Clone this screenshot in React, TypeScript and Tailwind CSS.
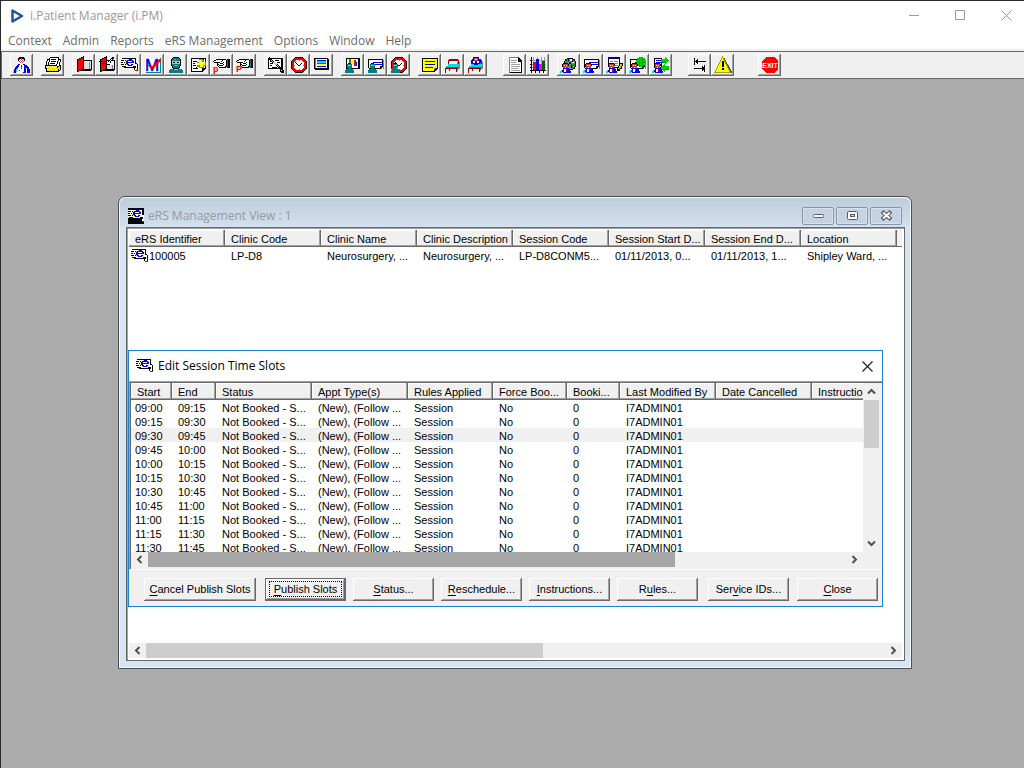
import React from "react";

type Shape = [color: string, d: string];

function Pixels({ shapes }: { shapes: Shape[] }) {
  return (
    <>
      {shapes.map(([color, d], i) => (
        <path key={i} fill={color} d={d} />
      ))}
    </>
  );
}

const palette: Record<string, string> = {
  k: "#000000",
  w: "#ffffff",
  b: "#0000ee",
  r: "#e00000",
  s: "#c05040",
  y: "#f0e000",
  Y: "#fff890",
  c: "#00e0ff",
  t: "#008080",
  g: "#808080",
};

function Bitmap({ rows, top = 0 }: { rows: string[]; top?: number }) {
  return (
    <>
      {Object.entries(palette).map(([key, color]) => {
        const d = rows
          .flatMap((row, y) => row.split("").map((ch, x) => (ch === key ? `M${x} ${y + top}h1v1h-1z` : "")))
          .join("");
        return d ? <path key={key} fill={color} d={d} /> : null;
      })}
    </>
  );
}

function Icon({ children }: { children: React.ReactNode }) {
  return (
    <svg viewBox="0 0 18 18" className="h-[18px] w-[18px] shrink-0" shapeRendering="crispEdges" aria-hidden="true">
      {children}
    </svg>
  );
}

const BLUE = "#0000ee";
const TEAL = "#008080";
const RED = "#ff0000";

function Clerk() {
  return (
    <Pixels
      shapes={[
        ["#000", "M3 7h5v1h-5zM2 8h1v3h-1zM8 8h1v2h-1z"],
        ["#c04030", "M3 8h5v4h-5z"],
        ["#fff", "M4 9h1v1h-1zM6 9h1v1h-1zM5 11h1v1h-1z"],
        [BLUE, "M3 12h6v1h1v2h1v2h-8v-1h-1v-2h1z"],
        ["#00e0ff", "M0 15h1v-1h1v3h-2z"],
        ["#fff", "M4 13h2v3h-2z"],
        [RED, "M6 13h1v2h-1z"],
      ]}
    />
  );
}

function Surgeon() {
  return (
    <Pixels
      shapes={[
        ["#000", "M4 7h3v1h-3z"],
        [TEAL, "M3 8h5v4h-5zM2 13h7v1h1v3h-9v-3h1zM4 12h3v1h-3z"],
        ["#e8a080", "M4 9h3v1h-3z"],
        [RED, "M7 9h1v1h-1z"],
      ]}
    />
  );
}

function Clock() {
  return (
    <>
      <circle cx="9" cy="9" r="7" fill="#fff" stroke="#000" strokeWidth="3" />
      <circle cx="9" cy="9" r="6.5" fill="#fff" stroke={RED} strokeWidth="2" />
      <Pixels
        shapes={[
          ["#000", "M8 9h2v1h-2zM7 8h1v1h-1zM6 7h1v1h-1zM5 6h1v1h-1zM10 8h1v1h-1zM11 7h1v1h-1z"],
          ["#808080", "M9 4h1v1h-1zM9 13h1v1h-1zM4 9h1v1h-1zM13 9h1v1h-1z"],
        ]}
      />
    </>
  );
}

const slotSearchRows = [
  ".kkkkkkkkkkkkkk..",
  "wwwwwwwybbbwwwk..",
  "kkkwkybbbbbbywk..",
  "wwwwwbbwwwwbbwk..",
  "kkwkwbbbbbbbbwk..",
  "wwwwybbwwwwwwwkk.",
  "kkkwkybbwwbbywwwk",
  "wwwwwwybbbbywwwwk",
  "wkkkkwwwwwwwkkkwk",
  "...kkkkkkkkkkkkwk",
  ".............kwwk",
  ".............kwwk",
  "..............rrr",
];

function SlotSearch() {
  return <Bitmap rows={slotSearchRows} top={2} />;
}

function Bed() {
  return (
    <Pixels
      shapes={[
        ["#808080", "M13 6h3v7h-2v2h-1z"],
        ["#a00000", "M5 3h9v1h1v5h-1v-4h-9v4h-1v-5h1zM1 12h13v1h-13zM1 13h1v4h-1zM12 13h1v3h-1zM5 13h1v2h-1z"],
        ["#fff", "M6 5h7v3h-7z"],
        ["#00e0e0", "M4 8h11v2h-1v2h-12v-2h2z"],
        [TEAL, "M2 11h12v1h-12z"],
      ]}
    />
  );
}

function Book() {
  return (
    <>
      <Pixels
        shapes={[
          ["#000", "M8 4h9v10h-1v1h-11v-2h3z"],
          ["#e0e0e0", "M9 5h7v8h-7z"],
          ["#808080", "M14 6h1v7h-1z"],
        ]}
      />
      <path d="M2 4l6-3v12l-6 3z" fill={RED} stroke="#000" strokeWidth="1" />
      <path d="M3 4l5-2.500v11l-5 2.500z" fill={RED} />
    </>
  );
}

function Hand({ letter }: { letter: string }) {
  return (
    <>
      <Bitmap
        top={3}
        rows={[
          "...kkkkkkkkkk.kkk",
          ".kkwwwwwwkwwwktkk",
          "kwwwwwwwkwwwwktkk",
          ".kkkkkkwwwkwwktkk",
          "....kwwkkkwwwktkk",
          "....kkwwwwkwwktkk",
          "....kwkkkkwwwktkk",
          ".....kwwwwwwkktkk",
          "......kkkkkkk.kkk",
        ]}
      />
      <text x="0" y="16" fill={RED} fontSize="9" fontWeight="700" fontFamily="Liberation Sans, sans-serif">
        {letter}
      </text>
    </>
  );
}

function Paper() {
  return (
    <Pixels
      shapes={[
        ["#808080", "M16 4h1v9h-1zM5 12h10v1h-10z"],
        ["#000", "M1 3h15v8h-1v1h-1v1h-12v-1h-1z"],
        ["#fff", "M2 4h13v6h-2v2h-11z"],
        [BLUE, "M6 6h9v1h-9zM6 8h9v1h-9z"],
      ]}
    />
  );
}

const tools: Record<string, React.ReactNode> = {
  Doctor: (
    <Bitmap
      top={1}
      rows={[
        "......kkkkk.......",
        ".....kkkrkkk......",
        ".....kswswsk......",
        ".....kwswswk......",
        "......swsws.......",
        "......wswsw.......",
        ".......www........",
        ".....bbwwwbb......",
        "....bbwwrwwbbb....",
        "...bbbwwrwwbbbb...",
        "..bbbwwwrwwbbbbb..",
        "..bbcwwwrwwbbwbb..",
        ".bbccwwwwwwbbwbbb.",
        ".bbcwwrwwwwbbwbbb.",
        "cbbcwwwwwwwbbwbbb.",
        "cbb.wwwwwwbbbwbbb.",
      ]}
    />
  ),
  Fax: (
    <Bitmap
      top={1}
      rows={[
        "......kkkkkkkkk...",
        ".....kwwwwwwwwk...",
        "...kkkwkkkkkwwkkk.",
        "...kwkwwwwwwwwkwk.",
        "..kwwkwkkkkkwkwwk.",
        "..kwkwwwwwwwwkwk..",
        "..kwkwkkkkkwwkwk..",
        "..kwkwwwwwwwkwwk..",
        ".kkkkkkkkkkkkwwkk.",
        ".kYyYyYyYyYyYkkyk.",
        ".kyYyYyYyYyYykyyk.",
        ".kkyyyyyyyyyyyyyk.",
        "..kYyYyYyYyYyYkyk.",
        "..kyyyyyyyyyyykk..",
        "..kkkkkkkkkkkkk...",
      ]}
    />
  ),
  "Open record": <Book />,
  "Edit record": (
    <>
      <Book />
      <Pixels
        shapes={[
          ["#fff", "M9 5h7v4h-7z"],
          ["#000", "M1 5h7v1h-7zM4 7h5v1h-5zM8 7h2v1h2v1h-4zM14 1h2v1h-2zM13 2h1v1h-1zM12 3h1v1h-1zM11 4h1v1h-1zM10 5h1v1h-1zM15 2h1v1h-1zM14 3h1v1h-1zM13 4h1v1h-1zM12 5h1v2h-1z"],
          ["#fff", "M9 7h1v1h-1zM11 6h1v1h-1zM13 3h1v1h-1zM12 4h1v1h-1zM11 5h1v1h-1z"],
          ["#000080", "M14 2h1v1h-1z"],
        ]}
      />
    </>
  ),
  "Session slots": <SlotSearch />,
  Maternity: (
    <>
      <Pixels shapes={[["#fff", "M1 2h15v14h-15z"], [TEAL, "M16 2h1v14h-1zM2 16h15v1h-15z"]]} />
      <text
        x="1"
        y="15"
        fill={BLUE}
        stroke={BLUE}
        strokeWidth="0.500"
        fontSize="17"
        fontFamily="Liberation Sans, sans-serif"
      >
        M
      </text>
      <path d="M5 9l3 3 8-8" stroke={RED} strokeWidth="1.6" fill="none" />
    </>
  ),
  Theatre: (
    <Pixels
      shapes={[
        ["#000", "M6 1h6v1h1v1h1v7h-1v2h-1v1h-6v-1h-1v-2h-1v-7h1v-1h1z"],
        [TEAL, "M6 2h6v1h1v2h-8v-2h1zM5 8h8v2h-1v2h-6v-2h-1z"],
        ["#e8b878", "M5 5h8v3h-8z"],
        ["#000", "M6 6h2v1h-2zM10 6h2v1h-2z"],
        ["#00c0c0", "M7 3h2v1h-2zM7 9h4v1h-4z"],
        [TEAL, "M3 13h12v1h1v3h-14v-3h1z"],
        ["#e8b878", "M7 13h4v1h-4z"],
      ]}
    />
  ),
  Notes: (
    <Pixels
      shapes={[
        ["#000", "M1 2h15v11h-1v1h-1v1h-1v1h-12z"],
        ["#fff", "M2 3h13v9h-3v3h-10z"],
        ["#000", "M3 5h4v1h-4zM3 7h2v1h-2zM3 9h3v1h-3zM3 12h5v1h-5z"],
        ["#808080", "M9 3h4v1h1v2h2v4h-2v2h-5v-1h-2v-5h2z"],
        ["#ffff00", "M9 4h3v2h3v3h-2v2h-3v-2h-3v-2h2z"],
        [BLUE, "M8 2h1v1h-1zM13 3h1v1h-1zM6 11h1v1h-1z"],
        ["#fff", "M11 6h2v2h-2z"],
      ]}
    />
  ),
  "Refer in": <Hand letter="p" />,
  "Refer out": <Hand letter="P" />,
  "Find clinic": (
    <>
      <Pixels
        shapes={[
          ["#000", "M1 2h15v11h-15z"],
          ["#fff", "M2 3h12v9h-12z"],
          ["#000", "M3 5h2v1h-2zM3 7h3v1h-3zM3 9h2v1h-2zM8 4h4v1h-4zM10 6h3v1h-3zM5 11h5v1h-5z"],
        ]}
      />
      <path d="M2 2l12 11" stroke="#000" strokeWidth="2" />
      <path d="M4 4l8 7" stroke="#c0c0c0" strokeWidth="1" />
      <Pixels shapes={[["#000", "M13 12h3v2h1v3h-3v-1h-1z"], ["#fff", "M14 14h1v1h-1z"]]} />
    </>
  ),
  "Waiting time": <Clock />,
  Diary: (
    <Pixels
      shapes={[
        ["#000", "M1 2h14v1h1v11h-14v-1h-1z"],
        ["#fff", "M2 3h12v9h-12z"],
        ["#808080", "M2 3h1v9h-1z"],
        [BLUE, "M4 4h9v1h-9zM4 10h9v1h-9z"],
        ["#00e0ff", "M4 5h9v2h-9z"],
        [RED, "M4 7h9v1h-9z"],
        ["#ffff00", "M4 8h9v1h-9z"],
      ]}
    />
  ),
  "Theatre chart": (
    <>
      <Pixels
        shapes={[
          ["#000", "M2 2h14v11h-14z"],
          ["#fff", "M3 3h11v9h-11z"],
          [RED, "M10 4h2v6h-2z"],
          ["#ffff00", "M8 4h1v4h-1z"],
          ["#00a000", "M5 3h2v4h-2z"],
          [BLUE, "M12 6h1v4h-1z"],
        ]}
      />
      <Surgeon />
    </>
  ),
  "Theatre list": (
    <>
      <Paper />
      <Surgeon />
    </>
  ),
  "Theatre time": (
    <>
      <Clock />
      <Surgeon />
    </>
  ),
  Memo: (
    <Pixels
      shapes={[
        ["#000", "M1 2h16v11h-1v1h-1v1h-1v1h-13z"],
        ["#ffff00", "M2 3h14v9h-3v3h-11z"],
        [BLUE, "M4 5h10v1h-10zM4 8h10v1h-10zM4 11h8v1h-8z"],
        ["#808000", "M13 12h2v1h-1v1h-1z"],
      ]}
    />
  ),
  Bed: <Bed />,
  "Bed nurse": (
    <>
      <Bed />
      <Pixels
        shapes={[
          [BLUE, "M6 1h6v2h2v4h-1v1h-2v1h-4v-1h-2v-1h-1v-3h2z"],
          ["#c04030", "M7 2h4v3h-4z"],
          ["#fff", "M8 3h2v1h-2zM6 5h2v2h-2zM10 5h2v2h-2z"],
        ]}
      />
    </>
  ),
  Document: (
    <Pixels
      shapes={[
        ["#808080", "M3 1h10v1h-9v15h-1z"],
        ["#000", "M12 1h1v1h1v1h1v1h1v13h-12v-1h11v-10h-3z"],
        ["#fff", "M4 2h8v4h3v10h-11z"],
        ["#a0a0a0", "M5 4h6v1h-6zM5 6h5v1h-5zM5 8h9v1h-9zM5 10h9v1h-9zM5 12h7v1h-7zM5 14h9v1h-9z"],
      ]}
    />
  ),
  Statistics: (
    <Pixels
      shapes={[
        ["#a0a0a0", "M4 1h1v13h-1zM8 1h1v13h-1zM12 1h1v13h-1zM15 1h1v13h-1zM2 4h15v1h-15zM2 8h15v1h-15zM2 11h15v1h-15z"],
        ["#000", "M2 1h1v16h-1zM1 14h16v1h-16zM1 4h1v1h-1zM1 8h1v1h-1zM1 11h1v1h-1zM6 15h1v2h-1zM10 15h1v2h-1zM14 15h1v2h-1z"],
        [RED, "M4 6h3v8h-3z"],
        [BLUE, "M7 3h3v11h-3z"],
        ["#ff00ff", "M10 8h3v6h-3z"],
        ["#006000", "M13 5h3v9h-3z"],
      ]}
    />
  ),
  "Booking web": (
    <>
      <circle cx="10" cy="8" r="6" fill="#808080" stroke="#000" strokeWidth="1" />
      <Pixels
        shapes={[
          ["#00a000", "M6 4h3v2h-2v2h-2v-2h1zM11 8h4v2h-2v2h-2z"],
          ["#fff", "M10 3h2v2h-2zM12 6h2v1h-2z"],
          [BLUE, "M9 6h2v2h-2z"],
          ["#000", "M8 3h1v2h-1zM12 4h1v2h-1zM11 9h1v3h-1z"],
        ]}
      />
      <Clerk />
    </>
  ),
  "Booking list": (
    <>
      <Paper />
      <Clerk />
    </>
  ),
  "Booking edit": (
    <>
      <Pixels
        shapes={[
          ["#000080", "M2 1h12v2h-12z"],
          ["#000", "M2 3h1v8h-1zM13 3h1v8h-1zM4 11h9v1h-9z"],
          ["#fff", "M3 3h10v8h-10z"],
          ["#808080", "M4 5h3v1h-3zM8 5h4v1h-4zM4 7h3v1h-3zM8 7h4v1h-4zM9 9h3v1h-3z"],
          ["#000", "M14 7h3v3h-1v3h-2v2h-3v-3h1v-2h2z"],
          ["#e0c000", "M14 8h2v2h-1v2h-1v1h-2v-1h1v-2h1z"],
        ]}
      />
      <Clerk />
    </>
  ),
  "Booking globe": (
    <>
      <Paper />
      <circle cx="12" cy="6" r="5" fill="#00d800" />
      <path d="M8 3.500h8M7 6.500h10M8 9.500h8M10.500 1v10M13.500 1v10" stroke="#00a800" strokeWidth="1" fill="none" />
      <Clerk />
    </>
  ),
  "Booking transfer": (
    <>
      <Pixels
        shapes={[
          ["#000", "M2 2h8v10h-8z"],
          ["#fff", "M3 3h6v8h-6z"],
          [BLUE, "M4 4h5v1h-5zM4 6h5v1h-5z"],
          ["#00d000", "M9 3h4v-2h1v1h1v1h1v1h1v1h-1v1h-1v1h-1v1h-1v-2h-4zM17 10v4h-4v2h-1v-1h-1v-1h-1v-1h-1v-2h1v-1h1v-1h1v-1h1v2z"],
          ["#008000", "M9 6h4v1h-4zM13 13h4v1h-4z"],
        ]}
      />
      <Clerk />
    </>
  ),
  "Tab order": (
    <Pixels
      shapes={[
        ["#000", "M3 2h1v7h-1zM4 5h11v1h-11zM5 4h1v3h-1zM6 3h1v5h-1zM13 9h1v7h-1zM3 12h10v1h-10zM12 11h1v3h-1zM11 10h1v5h-1z"],
      ]}
    />
  ),
  Alert: (
    <>
      <path d="M10 1l8 15v1h-15z" fill="#505050" />
      <path d="M8.500 1l7.500 15h-15z" fill="#ffff00" stroke="#a0a000" strokeWidth="1" />
      <Pixels shapes={[["#000", "M8 5h2v6h-2zM8 12h2v2h-2z"]]} />
    </>
  ),
  Exit: (
    <>
      <path d="M5 1h8l4 4v8l-4 4h-8l-4-4v-8z" fill={RED} />
      <text x="9" y="12" textAnchor="middle" fill="#fff" fontSize="7" fontWeight="700" fontFamily="Liberation Sans Narrow, Liberation Sans, sans-serif">
        EXIT
      </text>
    </>
  ),
};

const toolGroups: { lead: string; items: string[] }[] = [
  { lead: "ml-2", items: ["Doctor"] },
  { lead: "ml-2", items: ["Fax"] },
  {
    lead: "ml-2",
    items: ["Open record", "Edit record", "Session slots", "Maternity", "Theatre", "Notes", "Refer in", "Refer out"],
  },
  { lead: "ml-2", items: ["Find clinic", "Waiting time", "Diary"] },
  { lead: "ml-2", items: ["Theatre chart", "Theatre list", "Theatre time"] },
  { lead: "ml-2", items: ["Memo", "Bed", "Bed nurse"] },
  { lead: "ml-4", items: ["Document", "Statistics"] },
  { lead: "ml-2", items: ["Booking web", "Booking list", "Booking edit", "Booking globe", "Booking transfer"] },
  { lead: "ml-4", items: ["Tab order", "Alert"] },
  { lead: "ml-6", items: ["Exit"] },
];

const menus = ["Context", "Admin", "Reports", "eRS Management", "Options", "Window", "Help"];

const clinicColumns = [
  "eRS Identifier",
  "Clinic Code",
  "Clinic Name",
  "Clinic Description",
  "Session Code",
  "Session Start D...",
  "Session End D...",
  "Location",
];
const clinicRow = [
  "100005",
  "LP-D8",
  "Neurosurgery, ...",
  "Neurosurgery, ...",
  "LP-D8CONM5...",
  "01/11/2013, 0...",
  "01/11/2013, 1...",
  "Shipley Ward, ...",
];

const slotColumns: { label: string; width: string }[] = [
  { label: "Start", width: "w-[41px]" },
  { label: "End", width: "w-[44px]" },
  { label: "Status", width: "w-24" },
  { label: "Appt Type(s)", width: "w-24" },
  { label: "Rules Applied", width: "w-[85px]" },
  { label: "Force Boo...", width: "w-[74px]" },
  { label: "Booki...", width: "w-[53px]" },
  { label: "Last Modified By", width: "w-24" },
  { label: "Date Cancelled", width: "w-24" },
  { label: "Instructions", width: "w-24" },
];
const times = ["09:00", "09:15", "09:30", "09:45", "10:00", "10:15", "10:30", "10:45", "11:00", "11:15", "11:30", "11:45"];
const slots = times.slice(0, -1).map((start, i) => [
  start,
  times[i + 1],
  "Not Booked - S...",
  "(New), (Follow ...",
  "Session",
  "No",
  "0",
  "I7ADMIN01",
  "",
  "",
]);

const headerCell =
  "overflow-hidden whitespace-nowrap border-r border-b border-[#696969] bg-[#f0f0f0] px-1.5 pt-0.5 text-left font-normal shadow-[inset_-1px_-1px_0_#a0a0a0,inset_1px_1px_0_#fff]";

function Chevron({ d }: { d: string }) {
  return (
    <svg viewBox="0 0 9 9" className="h-[9px] w-[9px]" aria-hidden="true">
      <path d={d} fill="none" stroke="#505050" strokeWidth="2" />
    </svg>
  );
}

const LEFT = "M6.500 1L3 4.500L6.500 8";
const RIGHT = "M2.500 1L6 4.500L2.500 8";
const UP = "M1 6.500L4.500 3L8 6.500";
const DOWN = "M1 2.500L4.500 6L8 2.500";

function HScroll({ thumb, tail }: { thumb: string; tail: string }) {
  return (
    <div className={`flex h-[15px] shrink-0 items-stretch bg-[#f0f0f0] ${tail}`}>
      <button type="button" aria-label="Scroll left" className="flex w-[17px] items-center justify-center">
        <Chevron d={LEFT} />
      </button>
      <div className="flex flex-1">
        <div className={thumb} />
      </div>
      <button type="button" aria-label="Scroll right" className="flex w-[17px] items-center justify-center">
        <Chevron d={RIGHT} />
      </button>
    </div>
  );
}

function PushButton({ label, hot, wide, isDefault }: { label: string; hot: number; wide?: boolean; isDefault?: boolean }) {
  const text = (
    <span>
      {label.slice(0, hot)}
      <span className="underline underline-offset-2">{label[hot]}</span>
      {label.slice(hot + 1)}
    </span>
  );
  return (
    <button
      type="button"
      className={`flex h-[23px] items-center justify-center whitespace-nowrap bg-[#f0f0f0] ${wide ? "w-28" : "w-[81px]"} ${
        isDefault
          ? "border border-[#696969] shadow-[inset_-1px_-1px_0_#696969,inset_1px_1px_0_#fff,inset_-2px_-2px_0_#a0a0a0]"
          : "shadow-[inset_-1px_-1px_0_#696969,inset_1px_1px_0_#fff,inset_-2px_-2px_0_#a0a0a0]"
      }`}
    >
      {isDefault ? (
        <span className="flex h-4 w-[73px] items-center justify-center border border-dotted border-black">{text}</span>
      ) : (
        text
      )}
    </button>
  );
}

function CaptionButton({ label, children }: { label: string; children: React.ReactNode }) {
  return (
    <button
      type="button"
      aria-label={label}
      className="flex h-[18px] w-8 items-center justify-center rounded-[2px] border border-[#8796ad] bg-[#c4d2e2] shadow-[inset_0_0_0_1px_#d6e2ef]"
    >
      <svg viewBox="0 0 13 11" className="h-[11px] w-[13px]" aria-hidden="true">
        {children}
      </svg>
    </button>
  );
}

function ManagementWindow() {
  return (
    <section
      aria-label="eRS Management View"
      className="absolute top-[117px] left-[117px] flex h-[473px] w-[794px] flex-col rounded-t-[7px] border border-[#4b4f55] bg-[#d7e4f2] pr-[6px] pb-[7px] pl-[7px] shadow-[inset_0_0_0_1px_#f4f8fc]"
    >
      <header className="-mr-[5px] -ml-[6px] mt-px flex h-[29px] shrink-0 items-center justify-between rounded-t-[6px] bg-linear-to-b from-[#bfcddb] to-[#d3e0ee] pt-1.5 pr-2 pl-2">
        <div className="flex items-center gap-1">
          <span className="flex h-4 w-4 items-center justify-center overflow-hidden bg-black">
            <svg viewBox="0 1 16 16" className="h-4 w-4" shapeRendering="crispEdges" aria-hidden="true">
              <SlotSearch />
            </svg>
          </span>
          <h2 className="font-['Open_Sans',sans-serif] text-xs text-[#949aa2]">eRS Management View : 1</h2>
        </div>
        <div className="flex gap-[2px]">
          <CaptionButton label="Minimize">
            <rect x="1.500" y="4.500" width="10" height="3" rx="1" fill="#fff" stroke="#555c68" />
          </CaptionButton>
          <CaptionButton label="Restore">
            <rect x="1.500" y="1.500" width="10" height="8" rx="1" fill="#fff" stroke="#555c68" />
            <rect x="4.500" y="4.500" width="4" height="2" fill="#c4d2e2" stroke="#555c68" />
          </CaptionButton>
          <CaptionButton label="Close window">
            <path d="M2 1.500l9 8M11 1.500l-9 8" stroke="#555c68" strokeWidth="4" />
            <path d="M3 2.500l7 6M10 2.500l-7 6" stroke="#fff" strokeWidth="2" />
          </CaptionButton>
        </div>
      </header>
      <div className="flex min-h-0 flex-1 flex-col border border-[#696969] border-b-[#696969] bg-white shadow-[inset_1px_1px_0_#a0a0a0]">
        <div className="mt-0.5 mr-0.5 ml-0.5 flex min-h-0 flex-1 flex-col overflow-hidden">
          <table className="w-full table-fixed border-separate border-spacing-0 leading-[14px]">
            <thead>
              <tr>
                {clinicColumns.map((c) => (
                  <th key={c} className={`h-[17px] w-24 ${headerCell}`}>
                    {c}
                  </th>
                ))}
                <th aria-hidden="true" className="border-b border-[#696969] bg-[#f0f0f0]" />
              </tr>
            </thead>
            <tbody>
              <tr>
                {clinicRow.map((c, i) => (
                  <td key={i} className={`h-[18px] whitespace-nowrap ${i === 0 ? "pl-0.5" : "px-1.5"}`}>
                    {i === 0 ? (
                      <span className="flex items-center">
                        <Icon>
                          <SlotSearch />
                        </Icon>
                        {c}
                      </span>
                    ) : (
                      c
                    )}
                  </td>
                ))}
                <td />
              </tr>
            </tbody>
          </table>
        </div>
        <HScroll thumb="w-[397px] bg-[#cdcdcd]" tail="mr-0.5 ml-0.5 mb-0.5" />
      </div>
    </section>
  );
}

function SlotsDialog() {
  return (
    <section
      role="dialog"
      aria-label="Edit Session Time Slots"
      className="absolute top-[271px] left-[127px] flex h-[257px] w-[755px] flex-col border border-[#1883d7] bg-[#f0f0f0]"
    >
      <header className="flex h-[30px] shrink-0 items-center justify-between bg-white pr-2 pl-[7px]">
        <div className="flex items-center gap-1">
          <Icon>
            <SlotSearch />
          </Icon>
          <h2 className="font-['Open_Sans',sans-serif] text-xs text-black">Edit Session Time Slots</h2>
        </div>
        <button type="button" aria-label="Close dialog">
          <svg viewBox="0 0 13 13" className="h-[13px] w-[13px]" aria-hidden="true">
            <path d="M1.500 1.500l10 10M11.500 1.500l-10 10" stroke="#222" strokeWidth="1.200" />
          </svg>
        </button>
      </header>
      <div className="flex h-[188px] shrink-0 flex-col border-t border-l border-[#a0a0a0] bg-[#f0f0f0] shadow-[inset_1px_1px_0_#696969,0_1px_0_#fff]">
        <div className="mt-px mr-0.5 ml-px flex min-h-0 flex-1">
          <div className="min-w-0 flex-1 overflow-hidden bg-white">
            <table className="w-[777px] table-fixed border-separate border-spacing-0 leading-[14px]">
              <thead>
                <tr>
                  {slotColumns.map((c) => (
                    <th key={c.label} className={`h-[17px] ${c.width} ${headerCell}`}>
                      {c.label}
                    </th>
                  ))}
                </tr>
              </thead>
              <tbody className="leading-3">
                {slots.map((row, r) => (
                  <tr key={row[0]} className={r === 2 ? "bg-[#f0f0f0]" : "bg-white"}>
                    {row.map((c, i) => (
                      <td key={i} className={`h-[14px] pt-0.5 whitespace-nowrap ${i === 0 ? "px-1" : "px-1.5"}`}>
                        {c}
                      </td>
                    ))}
                  </tr>
                ))}
              </tbody>
            </table>
          </div>
          <div className="flex w-[17px] flex-col items-center bg-[#f0f0f0]">
            <button type="button" aria-label="Scroll up" className="flex h-[17px] w-full items-center justify-center">
              <Chevron d={UP} />
            </button>
            <div className="flex w-[15px] flex-1 flex-col">
              <div className="h-12 bg-[#cdcdcd]" />
            </div>
            <button type="button" aria-label="Scroll down" className="flex h-[17px] w-full items-center justify-center">
              <Chevron d={DOWN} />
            </button>
          </div>
        </div>
        <HScroll thumb="w-[527px] bg-[#a6a6a6]" tail="ml-px mr-[19px] mb-0.5" />
      </div>
      <div className="flex flex-1 items-center pt-[3px] pr-[4px] pl-[15px]">
        <div className="flex gap-[9px]">
          <PushButton label="Cancel Publish Slots" hot={0} wide />
          <PushButton label="Publish Slots" hot={0} isDefault />
        </div>
        <div className="ml-[7px] flex gap-[7px]">
          <PushButton label="Status..." hot={0} />
          <PushButton label="Reschedule..." hot={0} />
          <PushButton label="Instructions..." hot={0} />
          <PushButton label="Rules..." hot={1} />
        </div>
        <div className="ml-auto flex gap-2">
          <PushButton label="Service IDs..." hot={3} />
          <PushButton label="Close" hot={0} />
        </div>
      </div>
    </section>
  );
}

export default function App() {
  return (
    <div className="flex min-h-screen flex-col border-t border-l border-[#2b2b2b] bg-[#ababab] font-['Liberation_Sans',Arial,sans-serif] text-[11px] text-black">
      <header className="flex h-[29px] items-center justify-between bg-white pr-3 pl-[9px]">
        <div className="flex items-center gap-1.5">
          <svg viewBox="0 0 14 14" className="h-3.5 w-3.5" aria-hidden="true">
            <path d="M2.500 1.500v11L12 7z" fill="none" stroke="#1f5596" strokeWidth="2.500" strokeLinejoin="round" />
          </svg>
          <h1 className="font-['Open_Sans',sans-serif] text-xs text-[#999]">i.Patient Manager (i.PM)</h1>
        </div>
        <div className="flex items-center gap-[35px]">
          <button type="button" aria-label="Minimize application">
            <svg viewBox="0 0 11 11" className="h-[11px] w-[11px]" aria-hidden="true">
              <path d="M0 5.500h10" stroke="#999" />
            </svg>
          </button>
          <button type="button" aria-label="Maximize application">
            <svg viewBox="0 0 11 11" className="h-[11px] w-[11px]" aria-hidden="true">
              <path d="M.5.5h9v9h-9z" fill="none" stroke="#999" />
            </svg>
          </button>
          <button type="button" aria-label="Close application">
            <svg viewBox="0 0 11 11" className="h-[11px] w-[11px]" aria-hidden="true">
              <path d="M.5.5l10 10M10.500.5l-10 10" stroke="#999" />
            </svg>
          </button>
        </div>
      </header>
      <nav className="flex h-[19px] items-center gap-[11px] bg-white pt-0.5 pl-[7px] font-['Open_Sans',sans-serif] text-xs text-[#6d6d6d]">
        {menus.map((m) => (
          <button type="button" key={m}>
            {m}
          </button>
        ))}
      </nav>
      <div className="border-t-2 border-[#f0f0f0]">
        <div role="toolbar" aria-label="Main" className="flex h-7 items-center border-y border-l border-[#696969] bg-[#f0f0f0]">
          {toolGroups.map((g, i) => (
            <div key={i} className={`flex ${g.lead}`}>
              {g.items.map((name) => (
                <button
                  type="button"
                  key={name}
                  aria-label={name}
                  className="flex h-[22px] w-[23px] items-center justify-center bg-[#f0f0f0] shadow-[inset_-1px_-1px_0_#696969,inset_1px_1px_0_#fff,inset_-2px_-2px_0_#a0a0a0]"
                >
                  <Icon>{tools[name]}</Icon>
                </button>
              ))}
            </div>
          ))}
        </div>
      </div>
      <main className="relative flex-1 overflow-hidden">
        <ManagementWindow />
        <SlotsDialog />
      </main>
    </div>
  );
}
